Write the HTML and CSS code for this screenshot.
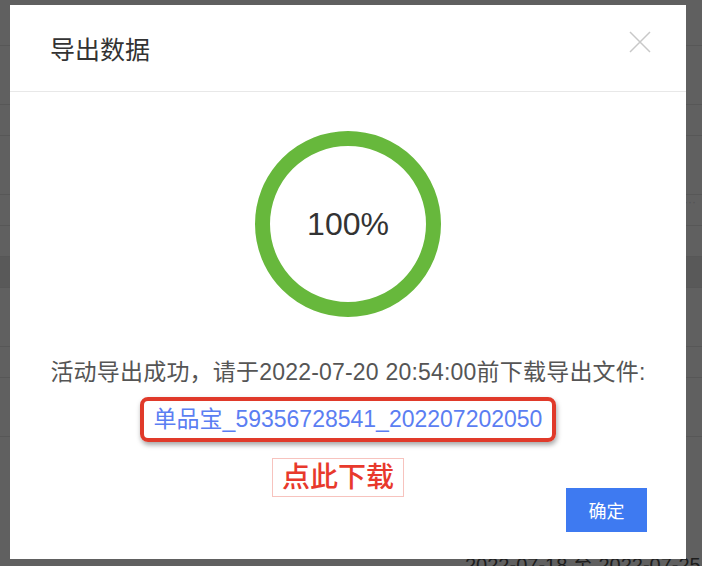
FILE: index.html
```html
<!DOCTYPE html>
<html lang="zh-CN">
<head>
  <meta charset="UTF-8">
  <title>导出数据</title>
  <link rel="stylesheet" href="styles.css">
</head>
<body>
  <div class="page">
    <div class="row"></div>
    <div class="row tall"></div>
    <div class="row"></div>
    <div class="row tall"></div>
    <div class="row"><span class="more">···</span></div>
    <div class="row"></div>
    <div class="row dark"></div>
    <div class="row tall"></div>
    <div class="row"></div>
    <div class="row tall"></div>
    <div class="row date">2022-07-18 至 2022-07-25</div>
  </div>

  <div class="mask"></div>

  <div class="dialog">
    <div class="dialog-header">
      <span class="dialog-title">导出数据</span>
      <svg class="close" width="22" height="22" viewBox="0 0 22 22">
        <path d="M1 1L21 21M21 1L1 21" stroke="#c8c8c8" stroke-width="1.5" fill="none"/>
      </svg>
    </div>

    <div class="dialog-body">
      <div class="progress">
        <svg width="186" height="186" viewBox="0 0 186 186">
          <circle cx="93" cy="93" r="85.5" stroke="#67b83c" stroke-width="15" fill="none"/>
        </svg>
        <span class="progress-text">100%</span>
      </div>

      <p class="tip">活动导出成功，请于2022-07-20 20:54:00前下载导出文件:</p>

      <div class="link-box">
        <a class="file-link" href="#">单品宝_59356728541_202207202050</a>
      </div>

      <div class="hint">点此下载</div>
    </div>

    <div class="dialog-footer">
      <button class="btn-ok">确定</button>
    </div>
  </div>
</body>
</html>
```

FILE: styles.css
```css
body {
  margin: 0;
  background: #646464;
  font-family: "Liberation Sans", "Noto Sans CJK SC", sans-serif;
  overflow: hidden;
}

/* page behind the mask */
.page {
  width: 702px;
  height: 566px;
  display: flex;
  flex-direction: column;
  padding-top: 15px;
  box-sizing: border-box;
}
.row {
  height: 30px;
  flex-shrink: 0;
  border-bottom: 1px solid #5a5a5a;
  position: relative;
}
.row.tall {
  height: 58px;
}
.row.dark {
  background: #5c5c5c;
}
.more {
  position: absolute;
  right: 6px;
  top: 0;
  color: #555;
  font-size: 12px;
}
.row.date {
  margin-top: auto;
  margin-bottom: -14px;
  border: none;
  height: 30px;
  padding-left: 465px;
  font-size: 20px;
  line-height: 30px;
  color: #1e1e1e;
  white-space: nowrap;
}

.mask {
  position: fixed;
  inset: 0;
  background: rgba(0, 0, 0, 0.03);
}

/* dialog */
.dialog {
  position: absolute;
  left: 10px;
  top: 5px;
  width: 676px;
  height: 554px;
  background: #fff;
  display: flex;
  flex-direction: column;
}
.dialog-header {
  height: 86px;
  flex-shrink: 0;
  border-bottom: 1px solid #e8e8e8;
  display: flex;
  align-items: center;
  justify-content: space-between;
  padding: 0 35px 0 40px;
}
.dialog-title {
  font-size: 25px;
  color: #333;
  margin-top: -1px;
}
.close {
  margin-top: -12px;
}

.dialog-body {
  height: 396px;
  flex-shrink: 0;
  display: flex;
  flex-direction: column;
  align-items: center;
}
.progress {
  position: relative;
  width: 186px;
  height: 186px;
  margin-top: 39px;
  flex-shrink: 0;
}
.progress svg {
  display: block;
}
.progress-text {
  position: absolute;
  inset: 0;
  display: flex;
  align-items: center;
  justify-content: center;
  font-size: 32px;
  color: #333;
}

.tip {
  margin: 40px 0 0;
  font-size: 23px;
  letter-spacing: 0.2px;
  color: #555;
  line-height: 30px;
  white-space: nowrap;
}
.link-box {
  margin-top: 10px;
  padding: 5px 10px;
  border: 4px solid #e03a2a;
  border-radius: 8px;
  box-shadow: 1px 3px 5px rgba(0, 0, 0, 0.35);
  flex-shrink: 0;
}
.file-link {
  display: block;
  font-size: 23px;
  line-height: 27px;
  color: #5b7ef2;
  text-decoration: none;
  white-space: nowrap;
}
.hint {
  margin: 16px 20px 0 0;
  padding: 1px 9px;
  border: 1px solid #f7c3be;
  font-size: 28px;
  line-height: 35px;
  color: #e8392c;
  font-weight: 500;
  flex-shrink: 0;
}

.dialog-footer {
  display: flex;
  justify-content: flex-end;
  padding: 0 39px 27px 0;
}
.btn-ok {
  width: 81px;
  height: 44px;
  border: none;
  background: #3e7af1;
  color: #fff;
  font-size: 18px;
  font-family: inherit;
}
```
